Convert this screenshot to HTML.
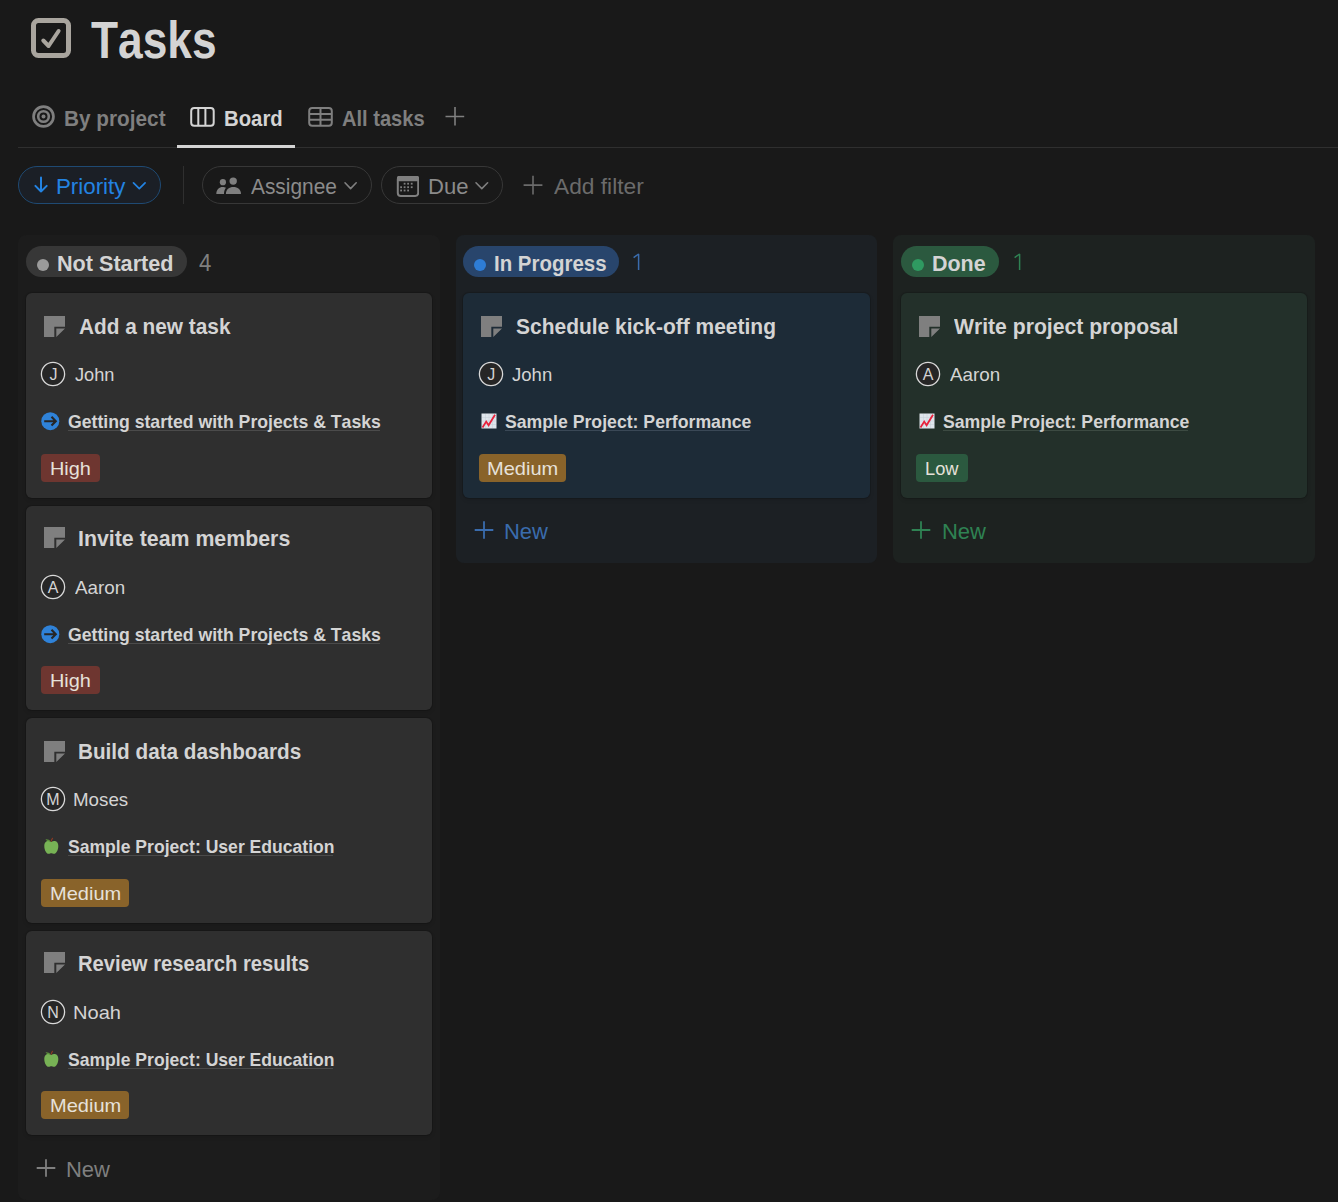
<!DOCTYPE html>
<html><head><meta charset="utf-8"><title>Tasks</title>
<style>
html,body{margin:0;padding:0;}
body{width:1338px;height:1202px;overflow:hidden;background:#191919;position:relative;font-family:"Liberation Sans",sans-serif;font-kerning:none;}
.t{position:absolute;white-space:nowrap;line-height:1;transform-origin:0 0;}
.b{position:absolute;display:block;}
</style></head><body>
<svg class="b" style="left:31px;top:18px" width="40" height="40" viewBox="0 0 40 40"><rect x="2.5" y="2.5" width="35" height="35" rx="5" fill="none" stroke="#a9a59e" stroke-width="5"/><path d="M12.3 22.5 L17.6 28 L27.6 13" fill="none" stroke="#a9a59e" stroke-width="4" stroke-linecap="round" stroke-linejoin="round"/></svg>
<div class="t" style="left:91.00px;top:15px;font-size:51px;font-weight:700;color:#d4d4d4;transform:scaleX(0.8680);">Tasks</div>
<svg class="b" style="left:31px;top:105px" width="25" height="25" viewBox="0 0 25 25"><circle cx="12.5" cy="11.5" r="9.95" fill="none" stroke="#7f7f7f" stroke-width="2.7"/><circle cx="12.5" cy="11.5" r="5.3" fill="none" stroke="#7f7f7f" stroke-width="2.6"/><circle cx="12.5" cy="11.5" r="2" fill="#7f7f7f"/></svg>
<div class="t" style="left:64.01px;top:108px;font-size:22.5px;font-weight:700;color:#7f7f7f;transform:scaleX(0.9229);">By project</div>
<svg class="b" style="left:189px;top:106px" width="27" height="22" viewBox="0 0 27 22"><rect x="2.2" y="2" width="22.5" height="17.7" rx="3" fill="none" stroke="#d4d4d4" stroke-width="2"/><path d="M9.3 2 V19.7 M16.4 2 V19.7" stroke="#d4d4d4" stroke-width="2"/></svg>
<div class="t" style="left:224.44px;top:108px;font-size:22.5px;font-weight:700;color:#d4d4d4;transform:scaleX(0.9030);">Board</div>
<div class="t" style="left:342.10px;top:108px;font-size:22.5px;font-weight:700;color:#7f7f7f;transform:scaleX(0.8928);">All tasks</div>
<svg class="b" style="left:307px;top:106px" width="27" height="22" viewBox="0 0 27 22"><rect x="2.2" y="2" width="22.6" height="17.8" rx="3" fill="none" stroke="#7f7f7f" stroke-width="2"/><path d="M2.2 7.9 H24.8 M2.2 13.7 H24.8 M13.5 2 V19.8" stroke="#7f7f7f" stroke-width="2"/></svg>
<svg class="b" style="left:444px;top:106px" width="22" height="21" viewBox="0 0 22 21"><path d="M11 1 V19.5 M1.5 10.5 H20.2" stroke="#7f7f7f" stroke-width="1.6"/></svg>
<div class="b" style="left:18px;top:147px;width:1320px;height:1px;background:#2f2f2f"></div>
<div class="b" style="left:177px;top:145px;width:118px;height:3px;background:#d4d4d4"></div>
<div class="b" style="left:18px;top:166px;width:143px;height:38px;box-sizing:border-box;border:1px solid #1f4a73;border-radius:19px;background:#1b1f26"></div>
<svg class="b" style="left:30px;top:172px" width="22" height="26" viewBox="0 0 22 26"><path d="M11 5.4 V19.5 M5.4 13.9 L11 19.5 L16.7 13.9" fill="none" stroke="#2383e2" stroke-width="2" stroke-linecap="round" stroke-linejoin="round"/></svg>
<div class="t" style="left:55.67px;top:176px;font-size:22px;font-weight:400;color:#2383e2;transform:scaleX(1.0135);">Priority</div>
<svg class="b" style="left:128px;top:176px" width="22" height="20" viewBox="0 0 22 20"><path d="M5.5 6.8 L11.3 12.6 L17.1 6.8" fill="none" stroke="#2383e2" stroke-width="1.7" stroke-linecap="round" stroke-linejoin="round"/></svg>
<div class="b" style="left:183px;top:166px;width:1px;height:38px;background:#2f2f2f"></div>
<div class="b" style="left:202px;top:166px;width:170px;height:38px;box-sizing:border-box;border:1px solid #373737;border-radius:19px"></div>
<svg class="b" style="left:212px;top:172px" width="34" height="28" viewBox="0 0 34 28"><circle cx="10.9" cy="10.2" r="3.1" fill="#7f7f7f"/><circle cx="21.2" cy="9.1" r="3.7" fill="#7f7f7f"/><path d="M4.3 21.9 C4.3 17.5 7.5 15 10.5 15 C12 15 13 15.3 14 15.8 C12.6 17.3 12 19.4 12 21.9 Z" fill="#7f7f7f"/><path d="M13.9 21.9 C13.9 17.6 17.2 15 21.4 15 C25.6 15 29 17.6 29 21.9 Z" fill="#7f7f7f"/></svg>
<div class="t" style="left:250.56px;top:176px;font-size:22px;font-weight:400;color:#8b8b8b;transform:scaleX(0.9488);">Assignee</div>
<svg class="b" style="left:340px;top:176px" width="22" height="20" viewBox="0 0 22 20"><path d="M5 6.8 L10.6 12.6 L16.2 6.8" fill="none" stroke="#7f7f7f" stroke-width="1.6" stroke-linecap="round" stroke-linejoin="round"/></svg>
<div class="b" style="left:381px;top:166px;width:122px;height:38px;box-sizing:border-box;border:1px solid #373737;border-radius:19px"></div>
<svg class="b" style="left:396px;top:176px" width="23" height="21" viewBox="0 0 23 21"><rect x="1.8" y="0.3" width="20.4" height="19.6" rx="3" fill="none" stroke="#7f7f7f" stroke-width="2"/><rect x="1" y="0" width="22" height="5.2" rx="2" fill="#7f7f7f"/><rect x="7.7" y="6.8" width="1.8" height="1.8" fill="#7f7f7f"/><rect x="11.2" y="6.8" width="1.8" height="1.8" fill="#7f7f7f"/><rect x="14.8" y="6.8" width="1.8" height="1.8" fill="#7f7f7f"/><rect x="4.2" y="10.3" width="1.8" height="1.8" fill="#7f7f7f"/><rect x="7.7" y="10.3" width="1.8" height="1.8" fill="#7f7f7f"/><rect x="11.2" y="10.3" width="1.8" height="1.8" fill="#7f7f7f"/><rect x="14.8" y="10.3" width="1.8" height="1.8" fill="#7f7f7f"/><rect x="4.2" y="13.6" width="1.8" height="1.8" fill="#7f7f7f"/><rect x="7.7" y="13.6" width="1.8" height="1.8" fill="#7f7f7f"/><rect x="11.2" y="13.6" width="1.8" height="1.8" fill="#7f7f7f"/></svg>
<div class="t" style="left:427.99px;top:176px;font-size:22px;font-weight:400;color:#8b8b8b;transform:scaleX(1.0033);">Due</div>
<svg class="b" style="left:471px;top:176px" width="22" height="20" viewBox="0 0 22 20"><path d="M5 6.8 L10.8 12.6 L16.6 6.8" fill="none" stroke="#7f7f7f" stroke-width="1.6" stroke-linecap="round" stroke-linejoin="round"/></svg>
<svg class="b" style="left:522px;top:174px" width="22" height="22" viewBox="0 0 22 22"><path d="M11 1.7 V20.5 M1.6 11.1 H20.4" stroke="#6b6b6b" stroke-width="1.6"/></svg>
<div class="t" style="left:553.96px;top:176px;font-size:22px;font-weight:400;color:#6b6b6b;transform:scaleX(1.0334);">Add filter</div>
<div class="b" style="left:18px;top:235px;width:422px;height:965px;background:#1c1c1c;border-radius:8px"></div>
<div class="b" style="left:26px;top:246px;width:161px;height:31px;background:#373737;border-radius:15.5px"></div>
<div class="b" style="left:36.7px;top:258.6px;width:12.6px;height:12.6px;background:#9b9b9b;border-radius:50%"></div>
<div class="t" style="left:57.05px;top:253px;font-size:22px;font-weight:700;color:#d4d4d4;transform:scaleX(0.9824);">Not Started</div>
<div class="t" style="left:198.89px;top:252px;font-size:23.5px;font-weight:400;color:#7f7f7f;transform:scaleX(0.9458);">4</div>
<div class="b" style="left:456px;top:235px;width:421px;height:328px;background:#1c2024;border-radius:8px"></div>
<div class="b" style="left:463px;top:246px;width:156px;height:31px;background:#28456c;border-radius:15.5px"></div>
<div class="b" style="left:473.7px;top:258.6px;width:12.6px;height:12.6px;background:#2e7dd6;border-radius:50%"></div>
<div class="t" style="left:494.13px;top:253px;font-size:22px;font-weight:700;color:#d4d4d4;transform:scaleX(0.9295);">In Progress</div>
<svg class="b" style="left:632.4px;top:250px" width="12" height="23" viewBox="0 0 12 23"><path d="M1.6 7.7 L6.6 4 V20" fill="none" stroke="#3a6cad" stroke-width="1.5" stroke-linejoin="bevel"/></svg>
<div class="b" style="left:893px;top:235px;width:422px;height:328px;background:#1d2220;border-radius:8px"></div>
<div class="b" style="left:901px;top:246px;width:98px;height:31px;background:#2b593f;border-radius:15.5px"></div>
<div class="b" style="left:911.7px;top:258.6px;width:12.6px;height:12.6px;background:#2f9a61;border-radius:50%"></div>
<div class="t" style="left:932.06px;top:253px;font-size:22px;font-weight:700;color:#d4d4d4;transform:scaleX(0.9758);">Done</div>
<svg class="b" style="left:1012.5px;top:250px" width="12" height="23" viewBox="0 0 12 23"><path d="M1.6 7.7 L6.6 4 V20" fill="none" stroke="#2f8253" stroke-width="1.5" stroke-linejoin="bevel"/></svg>
<div class="b" style="left:26px;top:293px;width:406px;height:205px;background:#2f2f2f;border-radius:6px;box-shadow:0 0 0 1px rgba(0,0,0,0.12), 0 2px 4px rgba(0,0,0,0.12)"></div>
<svg class="b" style="left:43.5px;top:315.5px" width="21" height="21" viewBox="0 0 21 21"><path d="M0 0 H21 V10.8 H10.3 V21 H0 Z M12.3 12.6 H21 L12.3 21 Z" fill="#7f7f7f"/></svg>
<div class="t" style="left:78.68px;top:315px;font-size:22.8px;font-weight:700;color:#d4d4d4;transform:scaleX(0.9128);">Add a new task</div>
<svg class="b" style="left:40px;top:361px" width="26" height="26" viewBox="0 0 26 26"><circle cx="13" cy="13" r="11.6" fill="#262626" stroke="#d9d9d9" stroke-width="1.3"/></svg>
<div class="t" style="left:49.47px;top:367px;font-size:16px;font-weight:400;color:#d4d4d4;">J</div>
<div class="t" style="left:74.72px;top:365px;font-size:19px;font-weight:400;color:#d4d4d4;transform:scaleX(0.9579);">John</div>
<svg class="b" style="left:40.8px;top:412px" width="19" height="19" viewBox="0 0 19 19"><circle cx="9.3" cy="9.2" r="9" fill="#2f82d8"/><path d="M3.2 9.2 H14.6 M10.5 4.8 L14.8 9.2 L10.5 13.6" fill="none" stroke="#262626" stroke-width="2.1"/></svg>
<div class="b" style="left:68px;top:430.3px;width:312px;height:1.2px;background:#4b4b4b"></div>
<div class="t" style="left:67.58px;top:413px;font-size:18.6px;font-weight:700;color:#d4d4d4;transform:scaleX(0.9492);">Getting started with Projects &amp; Tasks</div>
<div class="b" style="left:41px;top:454px;width:59px;height:28px;background:#6e3630;border-radius:4px"></div>
<div class="t" style="left:50.17px;top:460px;font-size:18.5px;font-weight:400;color:#e6e1da;transform:scaleX(1.0756);">High</div>
<div class="b" style="left:26px;top:506px;width:406px;height:204px;background:#2f2f2f;border-radius:6px;box-shadow:0 0 0 1px rgba(0,0,0,0.12), 0 2px 4px rgba(0,0,0,0.12)"></div>
<svg class="b" style="left:43.5px;top:527.2px" width="21" height="21" viewBox="0 0 21 21"><path d="M0 0 H21 V10.8 H10.3 V21 H0 Z M12.3 12.6 H21 L12.3 21 Z" fill="#7f7f7f"/></svg>
<div class="t" style="left:77.77px;top:527px;font-size:22.8px;font-weight:700;color:#d4d4d4;transform:scaleX(0.9360);">Invite team members</div>
<svg class="b" style="left:40px;top:574px" width="26" height="26" viewBox="0 0 26 26"><circle cx="13" cy="13" r="11.6" fill="#262626" stroke="#d9d9d9" stroke-width="1.3"/></svg>
<div class="t" style="left:47.66px;top:580px;font-size:16px;font-weight:400;color:#d4d4d4;">A</div>
<div class="t" style="left:74.96px;top:578px;font-size:19px;font-weight:400;color:#d4d4d4;transform:scaleX(0.9913);">Aaron</div>
<svg class="b" style="left:40.8px;top:625px" width="19" height="19" viewBox="0 0 19 19"><circle cx="9.3" cy="9.2" r="9" fill="#2f82d8"/><path d="M3.2 9.2 H14.6 M10.5 4.8 L14.8 9.2 L10.5 13.6" fill="none" stroke="#262626" stroke-width="2.1"/></svg>
<div class="b" style="left:68px;top:643.3px;width:312px;height:1.2px;background:#4b4b4b"></div>
<div class="t" style="left:67.58px;top:626px;font-size:18.6px;font-weight:700;color:#d4d4d4;transform:scaleX(0.9492);">Getting started with Projects &amp; Tasks</div>
<div class="b" style="left:41px;top:665.7px;width:59px;height:28px;background:#6e3630;border-radius:4px"></div>
<div class="t" style="left:50.17px;top:672px;font-size:18.5px;font-weight:400;color:#e6e1da;transform:scaleX(1.0756);">High</div>
<div class="b" style="left:26px;top:718px;width:406px;height:205px;background:#2f2f2f;border-radius:6px;box-shadow:0 0 0 1px rgba(0,0,0,0.12), 0 2px 4px rgba(0,0,0,0.12)"></div>
<svg class="b" style="left:43.5px;top:740.5px" width="21" height="21" viewBox="0 0 21 21"><path d="M0 0 H21 V10.8 H10.3 V21 H0 Z M12.3 12.6 H21 L12.3 21 Z" fill="#7f7f7f"/></svg>
<div class="t" style="left:77.81px;top:740px;font-size:22.8px;font-weight:700;color:#d4d4d4;transform:scaleX(0.9083);">Build data dashboards</div>
<svg class="b" style="left:40px;top:786px" width="26" height="26" viewBox="0 0 26 26"><circle cx="13" cy="13" r="11.6" fill="#262626" stroke="#d9d9d9" stroke-width="1.3"/></svg>
<div class="t" style="left:46.34px;top:792px;font-size:16px;font-weight:400;color:#d4d4d4;">M</div>
<div class="t" style="left:73.46px;top:790px;font-size:19px;font-weight:400;color:#d4d4d4;transform:scaleX(0.9867);">Moses</div>
<svg class="b" style="left:42.5px;top:834.5px" width="17" height="20" viewBox="0 0 17 20"><path d="M8.3 7 C6 5.2 1.3 5.5 1.3 11 C1.3 15.5 3.6 18.8 5.5 18.8 C6.9 18.8 7.4 18.2 8.3 18.2 C9.2 18.2 9.7 18.8 11.1 18.8 C13 18.8 15.3 15.5 15.3 11 C15.3 5.5 10.6 5.2 8.3 7 Z" fill="#77b255"/><path d="M2.5 4.2 C4.5 3.9 6.5 4.6 7.8 6.4 C5.6 6.6 3.6 5.9 2.5 4.2 Z" fill="#5c913b"/><path d="M8.1 6.6 C8.3 5.2 8.8 4 9.8 3" fill="none" stroke="#8a3a22" stroke-width="1.1"/></svg>
<div class="b" style="left:68px;top:855.3px;width:265px;height:1.2px;background:#4b4b4b"></div>
<div class="t" style="left:67.79px;top:838px;font-size:18.6px;font-weight:700;color:#d4d4d4;transform:scaleX(0.9448);">Sample Project: User Education</div>
<div class="b" style="left:41px;top:879px;width:88px;height:28px;background:#89632a;border-radius:4px"></div>
<div class="t" style="left:50.16px;top:885px;font-size:18.5px;font-weight:400;color:#e6e1da;transform:scaleX(1.0831);">Medium</div>
<div class="b" style="left:26px;top:931px;width:406px;height:204px;background:#2f2f2f;border-radius:6px;box-shadow:0 0 0 1px rgba(0,0,0,0.12), 0 2px 4px rgba(0,0,0,0.12)"></div>
<svg class="b" style="left:43.5px;top:952.2px" width="21" height="21" viewBox="0 0 21 21"><path d="M0 0 H21 V10.8 H10.3 V21 H0 Z M12.3 12.6 H21 L12.3 21 Z" fill="#7f7f7f"/></svg>
<div class="t" style="left:77.85px;top:952px;font-size:22.8px;font-weight:700;color:#d4d4d4;transform:scaleX(0.8854);">Review research results</div>
<svg class="b" style="left:40px;top:999px" width="26" height="26" viewBox="0 0 26 26"><circle cx="13" cy="13" r="11.6" fill="#262626" stroke="#d9d9d9" stroke-width="1.3"/></svg>
<div class="t" style="left:47.22px;top:1005px;font-size:16px;font-weight:400;color:#d4d4d4;">N</div>
<div class="t" style="left:73.35px;top:1003px;font-size:19px;font-weight:400;color:#d4d4d4;transform:scaleX(1.0556);">Noah</div>
<svg class="b" style="left:42.5px;top:1047.5px" width="17" height="20" viewBox="0 0 17 20"><path d="M8.3 7 C6 5.2 1.3 5.5 1.3 11 C1.3 15.5 3.6 18.8 5.5 18.8 C6.9 18.8 7.4 18.2 8.3 18.2 C9.2 18.2 9.7 18.8 11.1 18.8 C13 18.8 15.3 15.5 15.3 11 C15.3 5.5 10.6 5.2 8.3 7 Z" fill="#77b255"/><path d="M2.5 4.2 C4.5 3.9 6.5 4.6 7.8 6.4 C5.6 6.6 3.6 5.9 2.5 4.2 Z" fill="#5c913b"/><path d="M8.1 6.6 C8.3 5.2 8.8 4 9.8 3" fill="none" stroke="#8a3a22" stroke-width="1.1"/></svg>
<div class="b" style="left:68px;top:1068.3px;width:265px;height:1.2px;background:#4b4b4b"></div>
<div class="t" style="left:67.79px;top:1051px;font-size:18.6px;font-weight:700;color:#d4d4d4;transform:scaleX(0.9448);">Sample Project: User Education</div>
<div class="b" style="left:41px;top:1090.7px;width:88px;height:28px;background:#89632a;border-radius:4px"></div>
<div class="t" style="left:50.16px;top:1097px;font-size:18.5px;font-weight:400;color:#e6e1da;transform:scaleX(1.0831);">Medium</div>
<div class="b" style="left:463px;top:293px;width:407px;height:205px;background:#1d2b37;border-radius:6px;box-shadow:0 0 0 1px rgba(0,0,0,0.12), 0 2px 4px rgba(0,0,0,0.12)"></div>
<svg class="b" style="left:480.5px;top:315.5px" width="21" height="21" viewBox="0 0 21 21"><path d="M0 0 H21 V10.8 H10.3 V21 H0 Z M12.3 12.6 H21 L12.3 21 Z" fill="#7f7f7f"/></svg>
<div class="t" style="left:515.60px;top:315px;font-size:22.8px;font-weight:700;color:#d4d4d4;transform:scaleX(0.9203);">Schedule kick-off meeting</div>
<svg class="b" style="left:477.8px;top:361px" width="26" height="26" viewBox="0 0 26 26"><circle cx="13" cy="13" r="11.6" fill="#262626" stroke="#d9d9d9" stroke-width="1.3"/></svg>
<div class="t" style="left:487.27px;top:367px;font-size:16px;font-weight:400;color:#d4d4d4;">J</div>
<div class="t" style="left:511.71px;top:365px;font-size:19px;font-weight:400;color:#d4d4d4;transform:scaleX(0.9756);">John</div>
<svg class="b" style="left:480.5px;top:412.8px" width="16" height="16" viewBox="0 0 16 16"><rect x="0.5" y="0.5" width="15" height="15" fill="#dfe5ec"/><path d="M4.5 1 V15 M1 4.5 H15" stroke="#c5ced8" stroke-width="0.5"/><path d="M8 1 V15 M1 8 H15" stroke="#c5ced8" stroke-width="0.5"/><path d="M11.5 1 V15 M1 11.5 H15" stroke="#c5ced8" stroke-width="0.5"/><path d="M1.5 14.5 L5.2 8.6 L7.6 12.3 L14 1.8" fill="none" stroke="#e8223c" stroke-width="1.8"/></svg>
<div class="b" style="left:505px;top:430.3px;width:245px;height:1.2px;background:#3a4856"></div>
<div class="t" style="left:504.79px;top:413px;font-size:18.6px;font-weight:700;color:#d4d4d4;transform:scaleX(0.9497);">Sample Project: Performance</div>
<div class="b" style="left:479px;top:454px;width:87px;height:28px;background:#89632a;border-radius:4px"></div>
<div class="t" style="left:487.16px;top:460px;font-size:18.5px;font-weight:400;color:#e6e1da;transform:scaleX(1.0831);">Medium</div>
<div class="b" style="left:901px;top:293px;width:406px;height:205px;background:#23302a;border-radius:6px;box-shadow:0 0 0 1px rgba(0,0,0,0.12), 0 2px 4px rgba(0,0,0,0.12)"></div>
<svg class="b" style="left:918.5px;top:315.5px" width="21" height="21" viewBox="0 0 21 21"><path d="M0 0 H21 V10.8 H10.3 V21 H0 Z M12.3 12.6 H21 L12.3 21 Z" fill="#7f7f7f"/></svg>
<div class="t" style="left:954.18px;top:315px;font-size:22.8px;font-weight:700;color:#d4d4d4;transform:scaleX(0.9279);">Write project proposal</div>
<svg class="b" style="left:915px;top:361px" width="26" height="26" viewBox="0 0 26 26"><circle cx="13" cy="13" r="11.6" fill="#262626" stroke="#d9d9d9" stroke-width="1.3"/></svg>
<div class="t" style="left:922.66px;top:367px;font-size:16px;font-weight:400;color:#d4d4d4;">A</div>
<div class="t" style="left:949.96px;top:365px;font-size:19px;font-weight:400;color:#d4d4d4;transform:scaleX(0.9913);">Aaron</div>
<svg class="b" style="left:918.5px;top:412.8px" width="16" height="16" viewBox="0 0 16 16"><rect x="0.5" y="0.5" width="15" height="15" fill="#dfe5ec"/><path d="M4.5 1 V15 M1 4.5 H15" stroke="#c5ced8" stroke-width="0.5"/><path d="M8 1 V15 M1 8 H15" stroke="#c5ced8" stroke-width="0.5"/><path d="M11.5 1 V15 M1 11.5 H15" stroke="#c5ced8" stroke-width="0.5"/><path d="M1.5 14.5 L5.2 8.6 L7.6 12.3 L14 1.8" fill="none" stroke="#e8223c" stroke-width="1.8"/></svg>
<div class="b" style="left:943px;top:430.3px;width:245px;height:1.2px;background:#3c4a42"></div>
<div class="t" style="left:942.79px;top:413px;font-size:18.6px;font-weight:700;color:#d4d4d4;transform:scaleX(0.9497);">Sample Project: Performance</div>
<div class="b" style="left:916px;top:454px;width:52px;height:28px;background:#2b593f;border-radius:4px"></div>
<div class="t" style="left:925.30px;top:460px;font-size:18.5px;font-weight:400;color:#e6e1da;transform:scaleX(0.9857);">Low</div>
<svg class="b" style="left:35.75px;top:1158px" width="20" height="20" viewBox="0 0 20 20"><path d="M10 1.2 V18.8 M0.7 10 H19.3" stroke="#7f7f7f" stroke-width="1.8"/></svg>
<div class="t" style="left:66.00px;top:1159px;font-size:22.5px;font-weight:400;color:#7f7f7f;transform:scaleX(0.9764);">New</div>
<svg class="b" style="left:473.95px;top:520.35px" width="20" height="20" viewBox="0 0 20 20"><path d="M10 1.2 V18.8 M0.7 10 H19.3" stroke="#3a6cad" stroke-width="1.8"/></svg>
<div class="t" style="left:504.20px;top:521px;font-size:22.5px;font-weight:400;color:#3a6cad;transform:scaleX(0.9764);">New</div>
<svg class="b" style="left:911.3px;top:520.35px" width="20" height="20" viewBox="0 0 20 20"><path d="M10 1.2 V18.8 M0.7 10 H19.3" stroke="#2f8253" stroke-width="1.8"/></svg>
<div class="t" style="left:941.70px;top:521px;font-size:22.5px;font-weight:400;color:#2f8253;transform:scaleX(0.9764);">New</div>
</body></html>
